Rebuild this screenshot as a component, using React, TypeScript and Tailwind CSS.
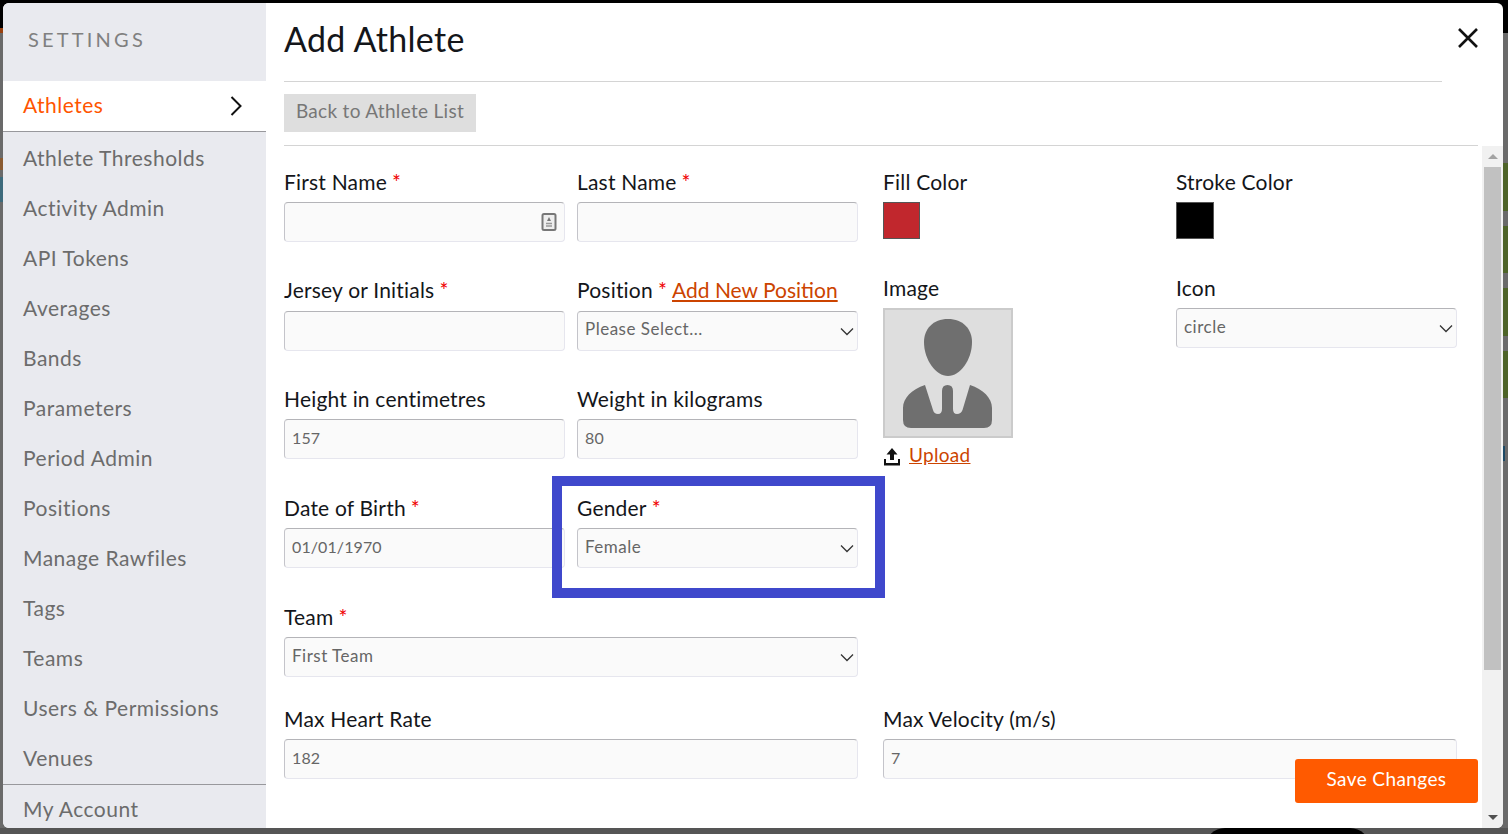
import type { ReactNode } from "react";

const NAV_ITEMS = [
  "Athlete Thresholds",
  "Activity Admin",
  "API Tokens",
  "Averages",
  "Bands",
  "Parameters",
  "Period Admin",
  "Positions",
  "Manage Rawfiles",
  "Tags",
  "Teams",
  "Users & Permissions",
  "Venues",
];

const inputBase =
  "w-full h-10 rounded-[4px] border border-[#e6e6ee] border-t-[#b4b4b8] border-l-[#c4c4ca] bg-[#fafafa] px-[7px] text-[#666] outline-none";

function Label({ text, required, children }: { text: string; required?: boolean; children?: ReactNode }) {
  return (
    <div className="h-8 mb-1 pb-px flex items-center gap-[5px] text-[21px] tracking-[0.2px] text-[#14161a] whitespace-nowrap">
      <span>{text}</span>
      {required && <span className="text-[#f00000]">*</span>}
      {children}
    </div>
  );
}

function TextField({ value }: { value?: string }) {
  return <input readOnly value={value ?? ""} className={`${inputBase} pb-[3px] text-[16px] tracking-[0.1px]`} />;
}

function SelectField({ value }: { value: string }) {
  return (
    <div className="relative">
      <select defaultValue={value} className={`${inputBase} appearance-none pb-[3px] text-[17px] tracking-[0.5px]`}>
        <option>{value}</option>
      </select>
      <svg className="absolute right-[4px] top-[16px] pointer-events-none" width="14" height="9" viewBox="0 0 14 9" fill="none">
        <path d="M1 1.5 7 7.5 13 1.5" stroke="#333" strokeWidth="1.3" />
      </svg>
    </div>
  );
}

function Backdrop() {
  return (
    <div className="absolute inset-0 bg-[#6a6a6a]">
      <div className="absolute inset-x-0 top-0 h-[33px] bg-black" />
      <div className="absolute left-0 top-[28px] h-[5px] w-[3px] bg-[#9a4210]" />
      <div className="absolute left-0 top-[158px] h-[12px] w-[3px] bg-[#8a5a30]" />
      <div className="absolute left-0 top-[177px] h-[25px] w-[3px] bg-[#3d6a7c]" />
      <div className="absolute right-0 top-[163px] h-[48px] w-[5px] bg-[#4e6428]" />
      <div className="absolute right-0 top-[226px] h-[47px] w-[5px] bg-[#4e6428]" />
      <div className="absolute right-0 top-[288px] h-[48px] w-[5px] bg-[#4e6428]" />
      <div className="absolute right-0 top-[351px] h-[47px] w-[5px] bg-[#4e6428]" />
      <div className="absolute right-[3px] top-[446px] h-[15px] w-[2px] bg-[#1d4a66]" />
      <div className="absolute inset-x-0 bottom-0 h-[6px] bg-[#555]" />
      <div className="absolute left-[1205px] bottom-[-14px] h-[20px] w-[165px] rounded-t-full bg-black" />
    </div>
  );
}

function Sidebar() {
  return (
    <aside className="w-[263px] shrink-0 h-full overflow-hidden bg-[#e9eaef] text-[21px] tracking-[0.5px] text-[#6c6c6c]">
      <div className="h-[78px] pl-[25px] pt-[21px] text-[20px] tracking-[0.16em] text-[#808080]">SETTINGS</div>
      <div className="h-[51px] bg-white border-b border-[#98989c] pl-5 pr-6 pb-[3px] flex items-center justify-between text-[#ff5500]">
        <span>Athletes</span>
        <svg className="mt-[3px]" width="12" height="20" viewBox="0 0 12 20" fill="none">
          <path d="M1.5 1 10.5 10 1.5 19" stroke="#111" strokeWidth="2" />
        </svg>
      </div>
      <div className="pt-px">
        {NAV_ITEMS.map((item) => (
          <div key={item} className="h-[50px] pl-5 pb-px flex items-center">
            {item}
          </div>
        ))}
      </div>
      <div className="h-[50px] mt-px border-t border-[#98989c] pl-5 pb-px flex items-center">My Account</div>
    </aside>
  );
}

function AthleteForm() {
  return (
    <div className="w-[1216px] pl-[18px] pt-5 shrink-0">
      <div className="flex gap-[25px]">
        <div className="w-[574px] grid grid-cols-2 gap-x-3 grid-rows-[repeat(4,108.7px)_102.200px]">
          <div>
            <Label text="First Name" required />
            <div className="relative">
              <TextField />
              <svg className="absolute right-[8px] top-[11px]" width="16" height="18" viewBox="0 0 16 18" fill="none">
                <rect x="1.5" y="1" width="13" height="16" rx="1.5" stroke="#777" strokeWidth="2" fill="#eee" />
                <path d="M8 4 10 8H6Z" fill="#777" />
                <path d="M5 10.5h6M5 13h6" stroke="#999" strokeWidth="1.4" />
              </svg>
            </div>
          </div>
          <div>
            <Label text="Last Name" required />
            <TextField />
          </div>
          <div>
            <Label text="Jersey or Initials" required />
            <TextField />
          </div>
          <div>
            <Label text="Position" required>
              <a className="text-[#cc4400] underline tracking-normal">Add New Position</a>
            </Label>
            <SelectField value="Please Select..." />
          </div>
          <div>
            <Label text="Height in centimetres" />
            <TextField value="157" />
          </div>
          <div>
            <Label text="Weight in kilograms" />
            <TextField value="80" />
          </div>
          <div>
            <Label text="Date of Birth" required />
            <TextField value="01/01/1970" />
          </div>
          <div>
            <Label text="Gender" required />
            <SelectField value="Female" />
          </div>
          <div className="col-span-2">
            <Label text="Team" required />
            <SelectField value="First Team" />
          </div>
        </div>

        <div className="w-[574px] grid grid-cols-2 gap-x-3 auto-rows-[106px]">
          <div>
            <Label text="Fill Color" />
            <div className="h-[37px] w-[37px] border border-[#555] bg-[#c1272d]" />
          </div>
          <div>
            <Label text="Stroke Color" />
            <div className="h-[37px] w-[38px] border border-[#555] bg-black" />
          </div>
          <div>
            <Label text="Image" />
            <div className="h-[130px] w-[130px] border-2 border-[#cbcbcb] bg-[#dedede]">
              <svg className="-m-[2px]" width="130" height="130" viewBox="0 0 130 130">
                <path
                  fill="#6f6f6f"
                  d="M65 11C80 11 89 21 89 34 89 52 77 68 65 68 53 68 41 52 41 34 41 21 50 11 65 11Z"
                />
                <path
                  fill="#6f6f6f"
                  d="M42 77 50 102Q51 106 55 106 59 106 59 101L59 83Q59 77 64.5 77 70 77 70 83L70 101Q70 106 74 106 78 106 79.500 102L87 77C100 81 109 90 109 100L109 112Q109 120 101 120L28 120Q20 120 20 112L20 100C20 90 29 81 42 77Z"
                />
              </svg>
            </div>
            <div className="mt-[6px] flex items-center gap-2 text-[19px] tracking-[0.3px] text-[#cc4400]">
              <svg width="18" height="19" viewBox="0 0 18 19" fill="#111">
                <path d="M9 1 14.500 7.500H11V13H7V7.500H3.500Z" />
                <path d="M1 12H3V16H15V12H17V18.500H1Z" />
              </svg>
              <a className="underline -mt-[3px]">Upload</a>
            </div>
          </div>
          <div>
            <Label text="Icon" />
            <SelectField value="circle" />
          </div>
        </div>
      </div>

      <div className="flex gap-[25px]">
        <div className="w-[574px]">
          <Label text="Max Heart Rate" />
          <TextField value="182" />
        </div>
        <div className="w-[574px]">
          <Label text="Max Velocity (m/s)" />
          <TextField value="7" />
        </div>
      </div>
    </div>
  );
}

function Scrollbar() {
  return (
    <div className="w-[21px] h-full bg-[#f1f1f1] px-[2px] flex flex-col items-center">
      <div className="h-[21px] flex items-center justify-center">
        <div className="h-0 w-0 border-x-[5px] border-b-[5px] border-x-transparent border-b-[#a3a3a3]" />
      </div>
      <div className="h-[503px] w-full bg-[#c1c1c1]" />
      <div className="flex-1" />
      <div className="h-[21px] flex items-center justify-center">
        <div className="h-0 w-0 border-x-[5px] border-t-[5px] border-x-transparent border-t-[#505050]" />
      </div>
    </div>
  );
}

export default function App() {
  return (
    <div className="relative h-[834px] w-[1508px] overflow-hidden pt-[3px] pl-[3px] font-['Lato',sans-serif]">
      <Backdrop />
      <div className="relative flex h-[825px] w-[1500px] overflow-hidden rounded-[6px] bg-white">
        <Sidebar />
        <main className="flex-1 min-w-0 flex flex-col">
          <div className="pl-[18px]">
            <div className="w-[1158px] h-[79px] border-b border-[#d4d4d4] flex items-start">
              <h1 className="mt-[14px] text-[34px] leading-[44px] tracking-[0.3px] text-[#14161a]">Add Athlete</h1>
            </div>
            <div className="mt-[12px] h-[38px] w-[192px] bg-[#dedede] pb-1 flex items-center justify-center text-[19px] tracking-[0.3px] text-[#777]">
              Back to Athlete List
            </div>
            <div className="mt-[13px] w-[1194px] border-b border-[#d4d4d4]" />
          </div>
          <div className="flex-1 min-h-0 flex overflow-hidden">
            <AthleteForm />
            <Scrollbar />
          </div>
        </main>
        <svg className="absolute right-[25px] top-[25px]" width="20" height="20" viewBox="0 0 20 20" fill="none">
          <path d="M1 1 19 19M19 1 1 19" stroke="#111" strokeWidth="2.6" />
        </svg>
        <button className="absolute right-[25px] top-[756px] h-[44px] w-[183px] rounded-[3px] bg-[#ff5a00] pb-1 text-[19px] tracking-[0.4px] text-white">
          Save Changes
        </button>
      </div>
      {/* annotation box around the Gender field */}
      <div className="absolute left-[552px] top-[476px] h-[122px] w-[333px] border-[10px] border-[#3f48cc]" />
    </div>
  );
}
